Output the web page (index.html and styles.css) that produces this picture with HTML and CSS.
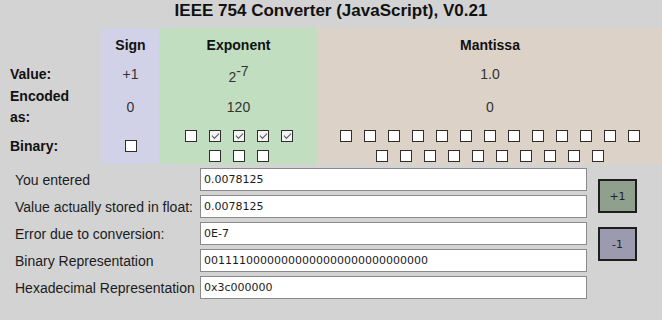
FILE: index.html
```html
<!DOCTYPE html>
<html lang="en">
<head>
    <meta charset="UTF-8">
    <title>IEEE 754 Converter</title>
    <link rel="stylesheet" href="styles.css">
</head>
<body>
    <h1>IEEE 754 Converter (JavaScript), V0.21</h1>

    <table class="bits">
        <tr class="head-row">
            <td class="label"></td>
            <th class="sign">Sign</th>
            <th class="exponent">Exponent</th>
            <th class="mantissa">Mantissa</th>
        </tr>
        <tr class="value-row">
            <td class="label">Value:</td>
            <td class="sign">+1</td>
            <td class="exponent">2<sup>-7</sup></td>
            <td class="mantissa">1.0</td>
        </tr>
        <tr class="encoded-row">
            <td class="label">Encoded<br>as:</td>
            <td class="sign">0</td>
            <td class="exponent">120</td>
            <td class="mantissa">0</td>
        </tr>
        <tr class="binary-row">
            <td class="label">Binary:</td>
            <td class="sign">
                <div class="boxes" id="sign-bits"></div>
            </td>
            <td class="exponent">
                <div class="boxes exp-boxes" id="exp-bits"></div>
            </td>
            <td class="mantissa">
                <div class="boxes man-boxes" id="man-bits"></div>
            </td>
        </tr>
    </table>

    <div class="converter">
        <div class="fields">
            <label for="entered">You entered</label>
            <input type="text" id="entered" value="0.0078125">

            <label for="stored">Value actually stored in float:</label>
            <input type="text" id="stored" value="0.0078125">

            <label for="error">Error due to conversion:</label>
            <input type="text" id="error" value="0E-7">

            <label for="binary">Binary Representation</label>
            <input type="text" id="binary" value="00111100000000000000000000000000">

            <label for="hex">Hexadecimal Representation</label>
            <input type="text" id="hex" value="0x3c000000">
        </div>
        <div class="steps">
            <button class="plus">+1</button>
            <button class="minus">-1</button>
        </div>
    </div>

    <script>
        // fill the bit checkboxes from the binary string
        const bits = document.getElementById('binary').value;

        function addBoxes(target, part) {
            const el = document.getElementById(target);
            for (const b of part) {
                const box = document.createElement('input');
                box.type = 'checkbox';
                box.checked = b === '1';
                el.appendChild(box);
            }
        }

        addBoxes('sign-bits', bits.slice(0, 1));
        addBoxes('exp-bits', bits.slice(1, 9));
        addBoxes('man-bits', bits.slice(9));
    </script>
</body>
</html>
```

FILE: styles.css
```css
body {
    margin: 0;
    background: #d3d3d3;
    font-family: "Liberation Sans", Arial, sans-serif;
    color: #1c1c1c;
}
h1 {
    margin: 0 0 6px 0;
    font-size: 17px;
    line-height: 22px;
    text-align: center;
    color: #111;
}
.bits {
    width: 100%;
    border-collapse: collapse;
    border-spacing: 0;
    font-size: 14px;
}
.bits td,
.bits th {
    padding: 0;
    text-align: center;
    vertical-align: middle;
}
.bits th {
    color: #111;
}
.bits .label {
    width: 92px;
    padding-left: 10px;
    text-align: left;
    font-weight: bold;
    color: #111;
    line-height: 21px;
}
.sign {
    width: 57px;
    background: #d1d1e7;
}
.exponent {
    width: 159px;
    background: #c1dec1;
}
.mantissa {
    background: #ddd2c7;
}
.bits td.sign,
.bits td.exponent,
.bits td.mantissa {
    color: #333;
}
.head-row {
    height: 34px;
}
.value-row {
    height: 24px;
}
.encoded-row {
    height: 40px;
}
.binary-row {
    height: 36px;
}
sup {
    font-size: 14px;
    vertical-align: 6px;
    line-height: 16px;
}
.value-row td {
    line-height: 16px;
}
.boxes {
    display: flex;
    flex-wrap: wrap;
    justify-content: center;
    row-gap: 8px;
    margin: 0 auto;
}
.exp-boxes {
    width: 120px;
}
.man-boxes {
    width: 312px;
}
.boxes input {
    appearance: none;
    -webkit-appearance: none;
    box-sizing: border-box;
    width: 12px;
    height: 12px;
    margin: 0 6px;
    border: 1px solid #2e2e2e;
    background: #fff;
    position: relative;
}
.boxes input:checked {
    background: #f4f4f4;
}
.boxes input:checked::after {
    content: "";
    position: absolute;
    left: 2px;
    top: 2px;
    width: 6px;
    height: 3px;
    border-left: 1px solid #555;
    border-bottom: 1px solid #555;
    transform: rotate(-45deg);
}
.converter {
    display: flex;
    padding: 4px 0 0 15px;
}
.fields {
    display: grid;
    grid-template-columns: 185px 387px;
    row-gap: 4px;
    align-items: center;
}
.fields label {
    font-size: 14px;
    color: #1c1c1c;
}
.fields input {
    box-sizing: border-box;
    height: 23px;
    padding: 0 3px;
    border: 1px solid #8a8a8a;
    background: #fff;
    font-family: "DejaVu Sans", Verdana, sans-serif;
    font-size: 11px;
    color: #1c1c1c;
}
.steps {
    display: flex;
    flex-direction: column;
    gap: 14px;
    padding: 11px 0 0 11px;
}
.steps button {
    box-sizing: border-box;
    width: 39px;
    height: 34px;
    border: 2px solid #1e1e1e;
    font-family: "DejaVu Sans", Verdana, sans-serif;
    font-size: 11px;
    color: #222;
    padding: 0;
    cursor: pointer;
}
.plus {
    background: #8fa08c;
}
.minus {
    background: #9c9aae;
}
```
